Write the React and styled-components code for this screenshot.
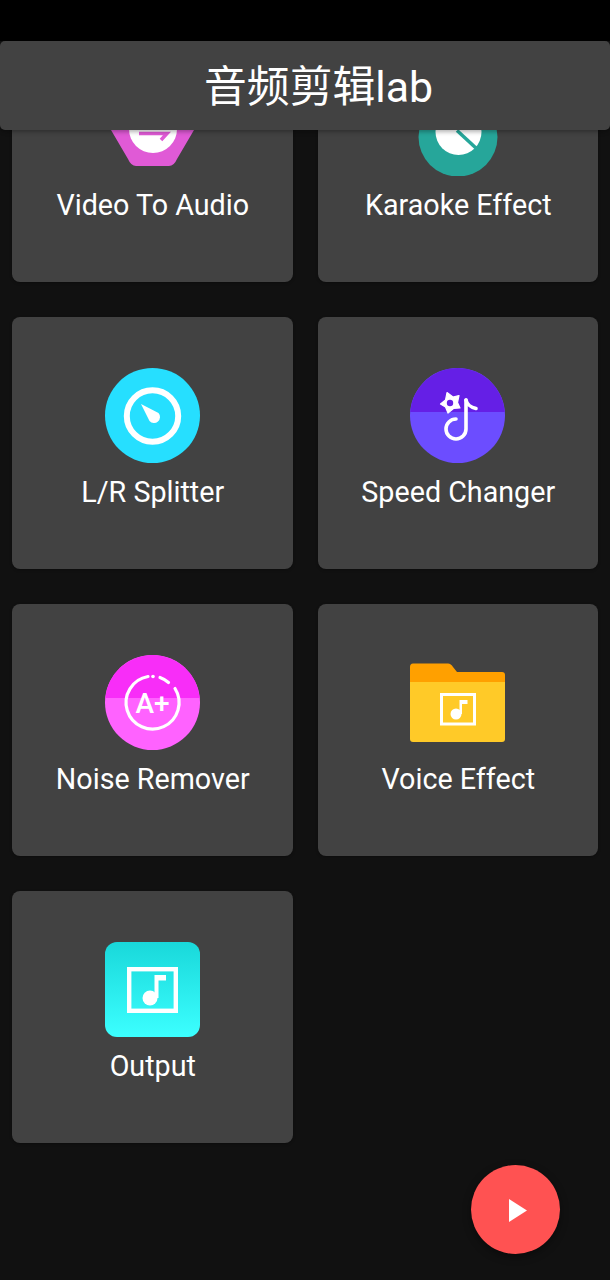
import React from "react";
import styled, { createGlobalStyle } from "styled-components";

const Global = createGlobalStyle`
  html, body { margin: 0; padding: 0; background: #111111; }
  body { font-family: Roboto, "Noto Sans CJK SC", sans-serif; overflow: hidden; }
`;

const Screen = styled.div`
  position: relative;
  width: 610px;
  height: 1280px;
  overflow: hidden;
  background: #111111;
`;

const StatusBar = styled.div`
  position: absolute;
  top: 0;
  left: 0;
  right: 0;
  height: 41px;
  background: #000000;
  z-index: 3;
`;

const AppBar = styled.header`
  position: absolute;
  top: 41px;
  left: 0;
  right: 0;
  height: 89px;
  display: flex;
  align-items: center;
  justify-content: center;
  padding: 4px 0 0 27px;
  box-sizing: border-box;
  background: #424242;
  border-radius: 5px;
  box-shadow: 0 2px 4px rgba(0, 0, 0, 0.3);
  z-index: 2;
`;

const Title = styled.h1`
  margin: 0;
  color: #ffffff;
  font-family: Roboto, "Noto Sans CJK SC", sans-serif;
  font-size: 42.8px;
  font-weight: 400;
  line-height: 1;
`;

const Grid = styled.main`
  display: grid;
  grid-template-columns: repeat(2, 1fr);
  column-gap: 25px;
  row-gap: 35px;
  padding: 30px 12px 0;
`;

const Card = styled.div`
  height: 252px;
  box-sizing: border-box;
  padding-top: 51px;
  display: flex;
  flex-direction: column;
  align-items: center;
  background: #424242;
  border-radius: 8px;
  box-shadow: 0 1px 3px rgba(0, 0, 0, 0.3);
`;

const IconSlot = styled.svg`
  display: block;
  width: 95px;
  height: 95px;
  flex: none;
`;

const Label = styled.div`
  margin-top: 12px;
  padding-left: 1px;
  color: #ffffff;
  font-size: 28.7px;
  line-height: 34px;
  white-space: nowrap;
`;

const Fab = styled.button`
  position: absolute;
  left: 471px;
  top: 1165px;
  width: 89px;
  height: 89px;
  padding: 0;
  border: none;
  border-radius: 50%;
  background: #ff5252;
  box-shadow: 0 3px 8px rgba(0, 0, 0, 0.4);
  display: flex;
  align-items: center;
  justify-content: center;
`;

const VideoIcon = () => (
  <IconSlot viewBox="0 0 95 95">
    <path d="M6 49 L23 78 Q26 85 31 85 L64 85 Q69 85 72 78 L89 49 Z" fill="#E05AD6" />
    <circle cx="48" cy="48" r="24" fill="#fff" />
    <path d="M34 52.5 H62 L56 59" fill="none" stroke="#E05AD6" strokeWidth="3.5" />
  </IconSlot>
);

const KaraokeIcon = () => (
  <IconSlot viewBox="0 0 95 95">
    <circle cx="48" cy="56" r="39.5" fill="#26A69A" />
    <circle cx="48.5" cy="51" r="23" fill="#fff" />
    <path d="M47 49.5 L67 68" stroke="#26A69A" strokeWidth="3.5" />
  </IconSlot>
);

const GaugeIcon = () => (
  <IconSlot viewBox="0 0 95 95">
    <circle cx="47.5" cy="47.5" r="47.5" fill="#26DFFF" />
    <circle cx="47.5" cy="48" r="25.7" fill="none" stroke="#fff" strokeWidth="6" />
    <path d="M36 36 L53.5 45 A6 6 0 0 1 44.5 53 Z" fill="#fff" />
  </IconSlot>
);

const SpeedIcon = () => (
  <IconSlot viewBox="0 0 95 95">
    <circle cx="47.5" cy="47.5" r="47.5" fill="#6C4DFF" />
    <path d="M0.13 44 A47.5 47.5 0 0 1 94.87 44 Z" fill="#651FE6" />
    <path d="M56 32 V61 A10 10 0 1 1 46 51" fill="none" stroke="#fff" strokeWidth="3.6" strokeLinecap="round" />
    <path d="M56 32 C57 37 60 39 66 40.5" fill="none" stroke="#fff" strokeWidth="3.6" strokeLinecap="round" />
    <path d="M37 24.5 L43 29 L49 27.5 L47.5 34.5 L50 40 L43.5 40.5 L38 45 L35.5 39 L30.5 36 L35.5 32 Z" fill="#fff" strokeLinejoin="round" stroke="#fff" strokeWidth="1.2" />
    <circle cx="40" cy="35" r="3.2" fill="#651FE6" />
  </IconSlot>
);

const NoiseIcon = () => (
  <IconSlot viewBox="0 0 95 95">
    <circle cx="47.5" cy="47.5" r="47.5" fill="#FF62FF" />
    <path d="M0.21 43 A47.5 47.5 0 0 1 94.79 43 Z" fill="#F82DF8" />
    <path d="M43 21.5 A26.5 26.5 0 1 0 70 33.5" fill="none" stroke="#fff" strokeWidth="3.2" strokeLinecap="round" />
    <path d="M55 22.5 A26.5 26.5 0 0 1 63.5 27.5" fill="none" stroke="#fff" strokeWidth="3.2" strokeLinecap="round" />
    <circle cx="48" cy="21.5" r="1.8" fill="#fff" />
    <text x="47.5" y="58" textAnchor="middle" fill="#fff" fontFamily="Roboto, sans-serif" fontSize="28" fontWeight="500">A+</text>
  </IconSlot>
);

const FolderIcon = () => (
  <IconSlot viewBox="0 0 95 95">
    <path d="M0 12 Q0 8.5 3 8.5 H38 Q41 8.5 43 12 L47 17 H92 Q95 17 95 20 V30 H0 Z" fill="#FFA000" />
    <path d="M0 27 H95 V84 Q95 87 92 87 H3 Q0 87 0 84 Z" fill="#FFCA28" />
    <rect x="31.5" y="39.5" width="33" height="29.5" fill="none" stroke="#fff" strokeWidth="3" />
    <circle cx="46" cy="59" r="5.5" fill="#fff" />
    <path d="M49.5 59 V45 H57.5 V49 H52 V59 Z" fill="#fff" />
  </IconSlot>
);

const OutputIcon = () => (
  <IconSlot viewBox="0 0 95 95">
    <defs>
      <linearGradient id="outputFill" x1="0" y1="0" x2="0" y2="1">
        <stop offset="0" stopColor="#19D8DA" />
        <stop offset="1" stopColor="#3CFFFF" />
      </linearGradient>
    </defs>
    <rect width="95" height="95" rx="12" fill="url(#outputFill)" />
    <rect x="24.2" y="27.2" width="46.6" height="41.6" fill="none" stroke="#fff" strokeWidth="4.4" />
    <circle cx="45" cy="56" r="7.5" fill="#fff" />
    <path d="M49.5 56 V33 H61 V38.5 H53.5 V56 Z" fill="#fff" />
  </IconSlot>
);

const tools = [
  { label: "Video To Audio", Icon: VideoIcon },
  { label: "Karaoke Effect", Icon: KaraokeIcon },
  { label: "L/R Splitter", Icon: GaugeIcon },
  { label: "Speed Changer", Icon: SpeedIcon },
  { label: "Noise Remover", Icon: NoiseIcon },
  { label: "Voice Effect", Icon: FolderIcon },
  { label: "Output", Icon: OutputIcon },
];

export default function App() {
  return (
    <Screen>
      <Global />
      <StatusBar />
      <AppBar>
        <Title>音频剪辑lab</Title>
      </AppBar>
      <Grid>
        {tools.map(({ label, Icon }) => (
          <Card key={label}>
            <Icon />
            <Label>{label}</Label>
          </Card>
        ))}
      </Grid>
      <Fab aria-label="play">
        <svg width="89" height="89" viewBox="0 0 89 89">
          <path d="M38 34 L56 45.5 L38 57 Z" fill="#fff" />
        </svg>
      </Fab>
    </Screen>
  );
}
